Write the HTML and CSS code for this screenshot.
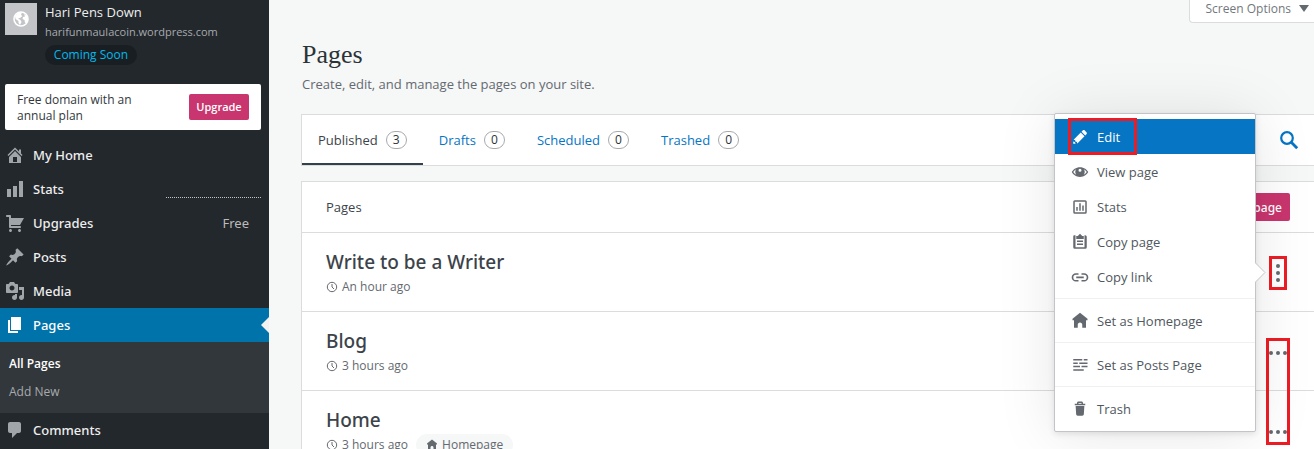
FILE: index.html
```html
<!DOCTYPE html>
<html lang="en">
<head>
<meta charset="utf-8">
<title>Pages</title>
<link rel="stylesheet" href="styles.css">
</head>
<body>
<aside class="sidebar">
  <div class="site">
    <div class="site-icon">
      <svg width="16" height="16" viewBox="0 0 16 16"><circle cx="8" cy="8" r="7" fill="none" stroke="#fff" stroke-width="1.6"/><path fill="#fff" d="M2 5l3-3 4-.5L8 4l1.500 1L7 7l-2 .5 2.500 1.500 1 2L7 14l-1.500-2V10L2.500 8zM11 3l3 2 .8 3-1 3.500L12 12l-.5-3L9.500 8l.5-2 2-.5z"/></svg>
    </div>
    <div class="site-info">
      <div class="site-name">Hari Pens Down</div>
      <div class="site-url">harifunmaulacoin.wordpress.com</div>
      <span class="site-badge">Coming Soon</span>
    </div>
  </div>
  <div class="upsell">
    <span class="upsell-text">Free domain with an annual plan</span>
    <button class="upsell-button" type="button">Upgrade</button>
  </div>
  <nav class="nav">
    <a class="nav-item" href="#"><svg viewBox="0 0 20 20"><path fill-rule="evenodd" d="M16 8.500l1.530 1.530-1.060 1.060L10 4.600l-6.470 6.490-1.060-1.060L10 2.500l4 4v-2h2v4zm-6-2.460l6 5.990V18H4v-5.970zM12 17v-5H8v5h4z"/></svg>My Home</a>
    <a class="nav-item" href="#"><svg viewBox="0 0 20 20"><path d="M18 18V2h-4v16h4zm-6 0V7H8v11h4zm-6 0v-8H2v8h4z"/></svg>Stats<span class="spark"></span></a>
    <a class="nav-item" href="#"><svg viewBox="0 0 20 20"><path d="M6 13h9c.55 0 1 .45 1 1s-.45 1-1 1H5c-.55 0-1-.45-1-1V4H2c-.55 0-1-.45-1-1s.45-1 1-1h3c.55 0 1 .45 1 1v2h13l-4 7H6v1zm-.5 3c.83 0 1.500.67 1.500 1.500S6.330 19 5.500 19 4 18.330 4 17.500 4.670 16 5.500 16zm9 0c.83 0 1.500.67 1.500 1.500s-.67 1.500-1.500 1.500-1.500-.67-1.500-1.500.67-1.500 1.500-1.500z"/></svg>Upgrades<span class="plan">Free</span></a>
    <a class="nav-item" href="#"><svg viewBox="0 0 20 20"><path d="M10.440 3.020l1.820-1.820 6.360 6.350-1.830 1.820c-1.050-.68-2.480-.57-3.410.36l-.75.75c-.92.93-1.040 2.350-.35 3.410l-1.830 1.820-2.410-2.410-2.800 2.790c-.42.42-3.380 2.710-3.800 2.290s1.860-3.390 2.280-3.810l2.790-2.790L4.100 9.360l1.830-1.820c1.050.69 2.480.57 3.400-.36l.75-.75c.93-.92 1.050-2.350.36-3.410z"/></svg>Posts</a>
    <a class="nav-item" href="#"><svg viewBox="0 0 20 20"><path fill-rule="evenodd" d="M13 11V4c0-.55-.45-1-1-1h-1.670L9 1H5L3.670 3H2c-.55 0-1 .45-1 1v7c0 .55.45 1 1 1h10c.55 0 1-.45 1-1zM7 4.500c1.380 0 2.500 1.120 2.500 2.500S8.380 9.500 7 9.500 4.500 8.380 4.500 7 5.620 4.500 7 4.500zM14 6h5v10.500c0 1.380-1.120 2.500-2.500 2.500S14 17.880 14 16.500s1.120-2.500 2.500-2.500c.17 0 .34.02.5.05V9h-3V6zm-4 8.050V13h2v3.500c0 1.380-1.120 2.500-2.500 2.500S7 17.880 7 16.500 8.120 14 9.500 14c.17 0 .34.02.5.05z"/></svg>Media</a>
    <a class="nav-item nav-current" href="#"><svg viewBox="0 0 20 20"><path d="M6 15V2h10v13H6zm-1 1h8v2H3V5h2v11z"/></svg>Pages</a>
    <div class="subnav">
      <a class="subnav-item subnav-current" href="#">All Pages</a>
      <a class="subnav-item" href="#">Add New</a>
    </div>
    <a class="nav-item" href="#"><svg viewBox="0 0 20 20"><path d="M5 2h9c1.100 0 2 .9 2 2v7c0 1.100-.9 2-2 2h-2l-5 5v-5H5c-1.100 0-2-.9-2-2V4c0-1.100.9-2 2-2z"/></svg>Comments</a>
  </nav>
</aside>
<main class="main">
  <div class="topbar">
    <button class="screen-options" type="button">Screen Options <svg width="10" height="7" viewBox="0 0 10 7"><path d="M0 0h10L5 7z"/></svg></button>
  </div>
  <header class="heading">
    <h1 class="title">Pages</h1>
    <p class="subtitle">Create, edit, and manage the pages on your site.</p>
  </header>
  <div class="tabs">
    <a class="tab tab-current" href="#">Published <span class="count">3</span></a>
    <a class="tab" href="#">Drafts <span class="count">0</span></a>
    <a class="tab" href="#">Scheduled <span class="count">0</span></a>
    <a class="tab" href="#">Trashed <span class="count">0</span></a>
    <button class="search" type="button" aria-label="Search"><svg width="20" height="20" viewBox="0 0 20 20" fill="none" stroke="#0675c4"><circle cx="8" cy="8" r="5.800" stroke-width="2.200"/><path stroke-width="2.800" d="M12 12l6.200 6.200"/></svg></button>
  </div>
  <section class="list">
    <div class="list-head"><span>Pages</span><button class="add-page" type="button">Add new page</button></div>
    <article class="row">
      <div>
        <h2 class="row-title">Write to be a Writer</h2>
        <div class="meta"><svg width="12" height="12" viewBox="0 0 12 12"><circle cx="6" cy="6" r="4.700"/><path d="M6 3v3l2 2"/></svg>An hour ago</div>
      </div>
      <div class="row-actions">
        <button class="more more-open" type="button" aria-label="More"><svg width="4" height="18" viewBox="0 0 4 18"><circle cx="2" cy="2" r="2"/><circle cx="2" cy="9" r="2"/><circle cx="2" cy="16" r="2"/></svg></button>
        <div class="menu">
          <button class="menu-item menu-active" type="button"><svg viewBox="0 0 24 24"><path d="M13 6l5 5-9.507 9.507c-.686-.686-.689-1.794-.012-2.485l-.003-.003c-.691.677-1.799.674-2.485-.012-.677-.677-.686-1.762-.036-2.455l-.008-.008c-.694.65-1.779.64-2.456-.036L13 6zm7.586-.414l-2.172-2.172c-.781-.781-2.047-.781-2.828 0L14 5l5 5 1.586-1.586c.781-.781.781-2.047 0-2.828zM3 18v3h3c0-1.657-1.343-3-3-3z"/></svg>Edit</button>
          <button class="menu-item" type="button"><svg viewBox="0 0 24 24"><path fill-rule="evenodd" d="M12 5.500C6.500 5.500 2.500 9 1 12c1.500 3 5.500 6.500 11 6.500S21.500 15 23 12c-1.500-3-5.500-6.500-11-6.500zM3 12c.9-1.400 2.200-2.700 4-3.600a6 6 0 0 0 0 7.200c-1.800-.9-3.100-2.200-4-3.600zm14 3.600a6 6 0 0 0 0-7.200c1.800.9 3.100 2.200 4 3.600-.9 1.400-2.200 2.700-4 3.600zM12 7.500a2 2 0 1 0 0 4 2 2 0 0 0 0-4z"/></svg>View page</button>
          <button class="menu-item" type="button"><svg viewBox="0 0 24 24"><path fill-rule="evenodd" d="M21 5v14a2 2 0 0 1-2 2H5a2 2 0 0 1-2-2V5a2 2 0 0 1 2-2h14a2 2 0 0 1 2 2zM5 5v14h14V5zM7 12h2v5H7zM11 7h2v10h-2zM15 10h2v7h-2z"/></svg>Stats</button>
          <button class="menu-item" type="button"><svg viewBox="0 0 24 24"><path fill-rule="evenodd" d="M7 8V4h2l3-3 3 3h2v4zM4 3h2v2v14h12V3h1a2 2 0 0 1 2 2v14a2 2 0 0 1-2 2H5a2 2 0 0 1-2-2V5a2 2 0 0 1 1-2zM8 10h8v2H8zM8 14h8v2H8z"/></svg>Copy page</button>
          <button class="menu-item" type="button"><svg viewBox="0 0 24 24"><path fill="none" stroke="#646970" stroke-width="2.200" d="M7 12.500h10M10 17H6.500a4.500 4.500 0 0 1 0-9H10M14 8h3.500a4.500 4.500 0 0 1 0 9H14"/></svg>Copy link</button>
          <div class="divider"></div>
          <button class="menu-item" type="button"><svg viewBox="0 0 24 24"><path d="M22 9L12 1 2 9v2h2v10h5v-4c0-1.657 1.343-3 3-3s3 1.343 3 3v4h5V11h2V9z"/></svg>Set as Homepage</button>
          <div class="divider"></div>
          <button class="menu-item" type="button"><svg viewBox="0 0 24 24"><path d="M3 4h12v2H3zM17 4h5v2h-5zM3 8.500h6v2H3zM11 8.500h11v2H11zM3 13h9v2H3zM14 13h8v2h-8zM3 17.500h14v2H3z"/></svg>Set as Posts Page</button>
          <div class="divider"></div>
          <button class="menu-item" type="button"><svg viewBox="0 0 24 24"><path fill-rule="evenodd" d="M6.187 8h11.625l-.695 11.125C17.050 20.180 16.177 21 15.120 21H8.880c-1.057 0-1.930-.82-1.997-1.875L6.187 8zM19 5v2H5V5h3V4c0-1.105.895-2 2-2h4c1.105 0 2 .895 2 2v1h3zm-9 0h4V4h-4v1z"/></svg>Trash</button>
          <svg class="menu-arrow" width="11" height="21" viewBox="0 0 11 21"><path fill="#fff" stroke="#c3c4c7" d="M0 .5l10 10-10 10"/></svg>
          <span class="mark mark-edit"></span>
        </div>
      </div>
    </article>
    <article class="row">
      <div>
        <h2 class="row-title">Blog</h2>
        <div class="meta"><svg width="12" height="12" viewBox="0 0 12 12"><circle cx="6" cy="6" r="4.700"/><path d="M6 3v3l2 2"/></svg>3 hours ago</div>
      </div>
      <div class="row-actions">
        <button class="more" type="button" aria-label="More"><svg width="18" height="4" viewBox="0 0 18 4"><circle cx="2" cy="2" r="2"/><circle cx="9" cy="2" r="2"/><circle cx="16" cy="2" r="2"/></svg></button>
        <span class="mark mark-more"></span>
      </div>
    </article>
    <article class="row">
      <div>
        <h2 class="row-title">Home</h2>
        <div class="meta"><svg width="12" height="12" viewBox="0 0 12 12"><circle cx="6" cy="6" r="4.700"/><path d="M6 3v3l2 2"/></svg>3 hours ago<span class="chip"><svg width="12" height="12" viewBox="0 0 24 24"><path d="M22 9L12 1 2 9v2h2v10h5v-4c0-1.657 1.343-3 3-3s3 1.343 3 3v4h5V11h2V9z"/></svg>Homepage</span></div>
      </div>
      <div class="row-actions">
        <button class="more" type="button" aria-label="More"><svg width="18" height="4" viewBox="0 0 18 4"><circle cx="2" cy="2" r="2"/><circle cx="9" cy="2" r="2"/><circle cx="16" cy="2" r="2"/></svg></button>
      </div>
    </article>
  </section>
</main>
</body>
</html>
```
FILE: styles.css
```css
* { box-sizing: border-box; }
body {
  margin: 0;
  height: 100vh;
  overflow: hidden;
  display: flex;
  background: #f6f7f7;
  color: #3c434a;
  font: 13px/18px "Open Sans", "Noto Sans", sans-serif;
}
a { color: inherit; text-decoration: none; }
button { font: inherit; color: inherit; border: 0; background: none; padding: 0; cursor: pointer; }
h1, h2, p { margin: 0; font-weight: 400; }
svg { flex: none; }

.sidebar { flex: 0 0 269px; background: #23282d; color: #eee; }
.site { display: flex; gap: 8px; padding: 3px 5px 0; }
.site-icon { width: 32px; height: 32px; flex: none; display: flex; align-items: center; justify-content: center; background: #c3c4c7; }
.site-info { min-width: 0; }
.site-name { line-height: 18px; }
.site-url { font-size: 11px; line-height: 22px; color: #a7aaad; }
.site-badge { display: block; width: 92px; margin-top: 2px; border-radius: 10px; background: #191e23; color: #00b9eb; font-size: 12px; line-height: 20px; text-align: center; }
.upsell { display: flex; align-items: center; justify-content: space-between; margin: 19px 8px 8px 5px; padding: 7px 12px; border-radius: 2px; background: #fff; }
.upsell-text { width: 124px; padding-top: 1px; margin-bottom: -1px; color: #32373c; font-size: 12px; line-height: 16px; }
.upsell-button { width: 60px; height: 26px; border-radius: 2px; background: #c9356e; color: #fff; font-size: 11px; font-weight: 600; }

.nav-item { position: relative; display: flex; align-items: center; gap: 8px; height: 34px; padding-left: 5px; font-family: "Noto Sans", sans-serif; font-weight: 500; }
.nav-item svg { width: 20px; height: 20px; fill: #a0a5aa; }
.nav-current { background: #0073aa; color: #fff; }
.nav-current svg { fill: #fff; }
.nav-current::after { content: ""; position: absolute; right: 0; border: 8px solid transparent; border-left: 0; border-right-color: #f1f1f1; }
.spark { width: 95px; margin: 17px 8px 0 auto; border-top: 1px dotted #c3c4c7; }
.plan { margin: 0 20px 0 auto; color: #bbb; font-weight: 400; }
.subnav { padding: 8px 0 7px; background: #32373c; }
.subnav-item { display: block; padding-left: 9px; font-size: 12px; line-height: 28px; color: #a7aaad; }
.subnav-current { color: #fff; font-weight: 600; }

.main { flex: 1; min-width: 0; padding-left: 32px; }
.topbar { display: flex; justify-content: flex-end; height: 23px; }
.screen-options { display: flex; align-items: center; gap: 8px; height: 23px; padding: 0 5px 5px 16px; border: solid #dcdcde; border-width: 0 0 1px 1px; border-radius: 0 0 0 4px; background: #fff; color: #72777c; font-size: 12px; }
.screen-options svg { fill: #646970; }
.heading { padding: 16px 0 19px 1px; }
.title { font: 26px/32px "Liberation Serif", serif; color: #2c3338; }
.subtitle { padding-top: 2px; line-height: 22px; color: #646970; }
.tabs { display: flex; height: 52px; border: 1px solid #dcdcde; border-right: 0; background: #fff; }
.tab { display: flex; align-items: center; gap: 8px; padding: 2px 16px 0; color: #0675c4; border-bottom: 2px solid transparent; }
.tab-current { color: #3c434a; border-color: #32414d; }
.count { min-width: 21px; border: 1px solid #a7aaad; border-radius: 9px; color: #2c3338; font-size: 12px; line-height: 16px; text-align: center; }
.search { display: flex; align-items: center; margin-left: auto; padding-right: 15px; }

.list { margin-top: 15px; border: 1px solid #dcdcde; border-right: 0; background: #fff; }
.list-head { display: flex; align-items: center; justify-content: space-between; height: 50px; padding: 0 24px; }
.add-page { height: 28px; padding: 2px 8px 0; border-radius: 2px; background: #c9356e; color: #fff; font-family: "Noto Sans", sans-serif; font-size: 12px; font-weight: 500; }
.row { display: flex; justify-content: space-between; height: 79px; padding: 16px 24px 0; border-top: 1px solid #dcdcde; }
.row-title { font-family: "Noto Sans", sans-serif; font-size: 19px; font-weight: 500; line-height: 26px; }
.meta { display: flex; align-items: center; gap: 4px; padding-top: 1px; font-size: 12px; line-height: 22px; color: #646970; }
.meta svg { fill: none; stroke: #646970; }
.chip { display: flex; align-items: center; gap: 4px; margin-left: 4px; padding: 0 10px; border-radius: 11px; background: #f6f7f7; }
.meta .chip svg { fill: #646970; stroke: none; }
.row-actions { position: relative; width: 24px; height: 48px; }
.more { display: flex; align-items: center; justify-content: center; width: 24px; height: 50px; fill: #646970; }
.more-open { outline: 3px solid #ed1c24; outline-offset: -3px; width: 18px; height: 34px; margin: 7px 3px; }

.menu { position: absolute; z-index: 2; right: 34px; top: -136px; width: 202px; padding: 5px 0; border: 1px solid #c3c4c7; border-radius: 2px; background: #fff; box-shadow: 0 2px 60px rgba(0, 0, 0, .1), 0 2px 6px rgba(0, 0, 0, .1); }
.menu-item { display: flex; align-items: center; gap: 8px; width: 100%; height: 35px; padding-left: 16px; text-align: left; color: #50575e; }
.menu-item svg { width: 18px; height: 18px; fill: #646970; }
.menu-active { background: #0675c4; color: #fff; }
.menu-active svg { fill: #fff; }
.divider { margin: 4px 0; border-top: 1px solid #f0f0f1; }
.menu-arrow { position: absolute; left: 100%; top: 148px; }
.mark { position: absolute; border: 3px solid #ed1c24; pointer-events: none; }
.mark-edit { left: 13px; top: 4px; width: 69px; height: 37px; }
.mark-more { z-index: 1; left: 0; top: 10px; width: 24px; height: 107px; }
```
